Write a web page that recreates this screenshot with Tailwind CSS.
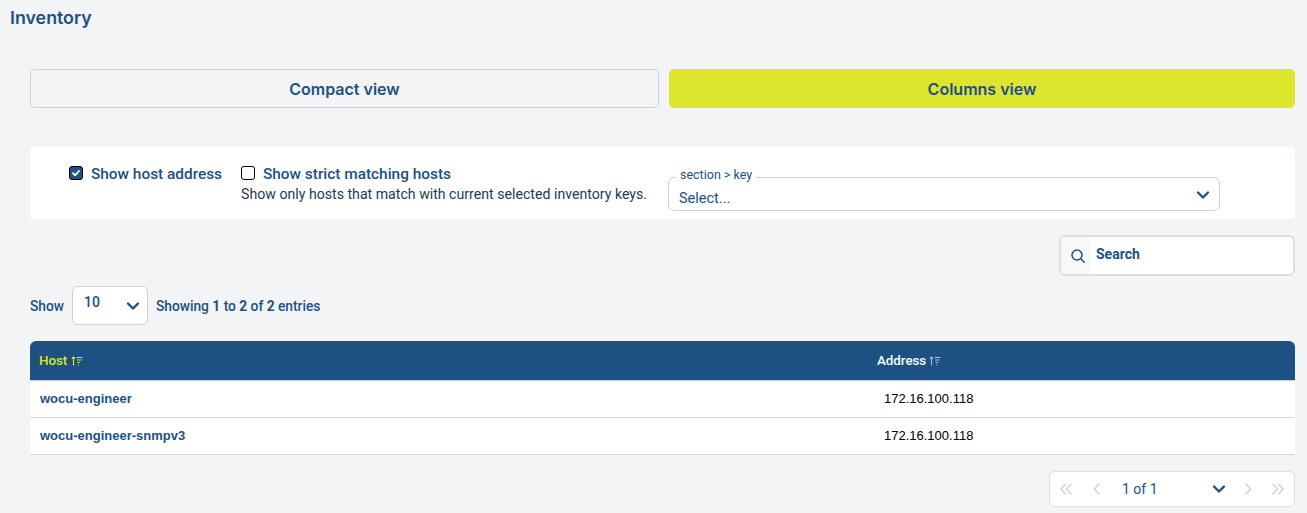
<!DOCTYPE html>
<html>
<head>
<meta charset="utf-8">
<script src="https://cdn.jsdelivr.net/npm/@tailwindcss/browser@4"></script>
</head>
<body class="bg-[#f3f4f6] font-['Roboto',sans-serif] text-[#1c5182] overflow-hidden">
<div class="w-[1307px] h-[513px] overflow-hidden">
  <h1 class="pl-[10px] pt-[8px] h-[69px] text-[17.8px] leading-[20px] font-semibold font-['Inter',sans-serif]">Inventory</h1>
  <div class="pl-[30px] pr-[12px]">
    <div class="flex gap-[10px] h-[39px] font-['Inter',sans-serif]">
      <button class="w-[629px] rounded-[5px] border border-[#cfd1d4] text-[16px] font-semibold">Compact view</button>
      <button class="w-[626px] rounded-[5px] bg-[#dee52d] text-[16px] font-semibold">Columns view</button>
    </div>
    <div class="mt-[39px] h-[72px] bg-white rounded-[4px] flex">
      <label class="ml-[39px] mt-[17px] flex items-start gap-[8px] w-[172px]">
        <span class="mt-[2px] w-[14px] h-[14px] rounded-[3px] bg-[#1c5182] border border-black flex items-center justify-center">
          <svg width="10" height="10" viewBox="0 0 10 10" fill="none" stroke="#fff" stroke-width="1.8" stroke-linecap="round" stroke-linejoin="round"><path d="M2 5.2l2.1 2.1L8 3"/></svg>
        </span>
        <span class="pt-[1px] text-[15.4px] leading-[19px] font-medium whitespace-nowrap">Show host address</span>
      </label>
      <div class="mt-[17px] w-[427px]">
        <label class="flex items-start gap-[8px] h-[19px]">
          <span class="mt-[2px] w-[14px] h-[14px] rounded-[3px] bg-white border border-black"></span>
          <span class="pt-[1px] text-[15.4px] leading-[19px] font-medium">Show strict matching hosts</span>
        </label>
        <p class="mt-[2px] text-[14.15px] leading-[18px] text-[#1f3a52] whitespace-nowrap">Show only hosts that match with current selected inventory keys.</p>
      </div>
      <fieldset class="relative mt-[21px] w-[552px] h-[43px]">
        <div class="absolute left-0 right-0 top-[9px] h-[34px] rounded-[6px] border border-[#cfd1d4] flex items-center justify-between pl-[10px] pr-[9px] pt-[10px]">
          <span class="text-[14.5px] leading-[16px]">Select...</span>
          <svg class="-mt-[8px]" width="14" height="10" viewBox="0 0 14 10" fill="none" stroke="#1c5182" stroke-width="2.4" stroke-linecap="round" stroke-linejoin="round"><path d="M2 2.5l5 5 5-5"/></svg>
        </div>
        <span class="absolute left-[8px] top-0 bg-white px-[4px] text-[12.5px] leading-[14px]">section &gt; key</span>
      </fieldset>
    </div>
    <div class="mt-[16px] flex justify-end">
      <div class="w-[236px] h-[41px] rounded-[6px] border-2 border-[#dcdee0] bg-white flex items-stretch overflow-hidden">
        <span class="w-[29px] bg-[#f7f8f9] flex items-center pl-[9px] shrink-0">
          <svg class="mt-[1px]" width="16" height="16" viewBox="0 0 16 16" fill="none" stroke="#1c5182" stroke-width="1.5" stroke-linecap="round"><circle cx="7" cy="7" r="5"/><path d="M10.800 10.800l3.400 3.400"/></svg>
        </span>
        <span class="ml-[6px] mt-[7px] text-[14px] leading-[20px] font-bold">Search</span>
      </div>
    </div>
    <div class="mt-[10px] h-[39px] flex items-center text-[13.75px] font-medium">
      <span class="pt-[1px]">Show</span>
      <div class="ml-[8px] w-[76px] h-[39px] rounded-[6px] border border-[#cfd1d4] bg-white flex justify-between pl-[11px] pr-[7px] pt-[6px]">
        <span class="text-[14px] leading-[18px]">10</span>
        <svg class="mt-[8px]" width="14" height="10" viewBox="0 0 14 10" fill="none" stroke="#1c5182" stroke-width="2.4" stroke-linecap="round" stroke-linejoin="round"><path d="M2 2.5l5 5 5-5"/></svg>
      </div>
      <span class="ml-[8px] pt-[1px]">Showing <b class="font-bold">1</b> to <b class="font-bold">2</b> of <b class="font-bold">2</b> entries</span>
    </div>
    <table class="mt-[16px] w-[1265px] table-fixed border-collapse text-[13px] font-['Liberation_Sans',sans-serif]">
      <colgroup><col class="w-[847px]"><col></colgroup>
      <thead>
        <tr class="h-[39px] bg-[#1c5182] border-b border-[#c9d3dd] text-left font-['Roboto',sans-serif] text-[13.3px]">
          <th class="pl-[9px] pt-[1px] rounded-tl-[6px] text-[#dee52d] font-medium"><span class="inline-flex items-center gap-[4px]">Host
            <svg width="12" height="10" viewBox="0 0 12 10" fill="none" stroke="#dee52d" stroke-width="1.1"><path d="M2.500 9.500V1M.8 2.700L2.500 1l1.700 1.700M5.500 1.500h6M6 4h4.500M6.500 6.500h2.500M7 9h1"/></svg></span></th>
          <th class="pl-0 pt-[1px] rounded-tr-[6px] text-white font-medium"><span class="inline-flex items-center gap-[3px]">Address
            <svg width="12" height="10" viewBox="0 0 12 10" fill="none" stroke="#a9bfd3" stroke-width="1.1"><path d="M2.500 9.500V1M.8 2.700L2.500 1l1.700 1.700M5.500 1.500h6M6 4h4.500M6.500 6.500h2.500M7 9h1"/></svg></span></th>
        </tr>
      </thead>
      <tbody class="bg-white">
        <tr class="h-[37px] border-b border-[#d5d7da]">
          <td class="pl-[10px] font-bold">wocu-engineer</td>
          <td class="pl-[7px] text-black">172.16.100.118</td>
        </tr>
        <tr class="h-[37px] border-b border-[#d5d7da]">
          <td class="pl-[10px] font-bold">wocu-engineer-snmpv3</td>
          <td class="pl-[7px] text-black">172.16.100.118</td>
        </tr>
      </tbody>
    </table>
    <div class="mt-[16px] flex justify-end">
      <div class="w-[246px] h-[36px] rounded-[6px] border border-[#dcdee0] bg-white flex items-center pl-[9px] text-[14px]">
        <svg width="14" height="12" viewBox="0 0 14 12" fill="none" stroke="#d0d2d5" stroke-width="1.500" stroke-linecap="round" stroke-linejoin="round"><path d="M6.500 1L2 6l4.500 5M12 1L7.500 6l4.500 5"/></svg>
        <svg class="ml-[19px]" width="9" height="12" viewBox="0 0 9 12" fill="none" stroke="#d0d2d5" stroke-width="1.500" stroke-linecap="round" stroke-linejoin="round"><path d="M7 1L2.500 6 7 11"/></svg>
        <span class="ml-[21px] w-[90px] pt-[2px]">1 of 1</span>
        <svg width="14" height="10" viewBox="0 0 14 10" fill="none" stroke="#1c5182" stroke-width="2.4" stroke-linecap="round" stroke-linejoin="round"><path d="M2 2.500l5 5 5-5"/></svg>
        <svg class="ml-[18px]" width="9" height="12" viewBox="0 0 9 12" fill="none" stroke="#d0d2d5" stroke-width="1.500" stroke-linecap="round" stroke-linejoin="round"><path d="M2 1l4.500 5L2 11"/></svg>
        <svg class="ml-[18px]" width="14" height="12" viewBox="0 0 14 12" fill="none" stroke="#d0d2d5" stroke-width="1.500" stroke-linecap="round" stroke-linejoin="round"><path d="M2 1l4.500 5L2 11M7.500 1L12 6l-4.500 5"/></svg>
      </div>
    </div>
  </div>
</div>
</body>
</html>
